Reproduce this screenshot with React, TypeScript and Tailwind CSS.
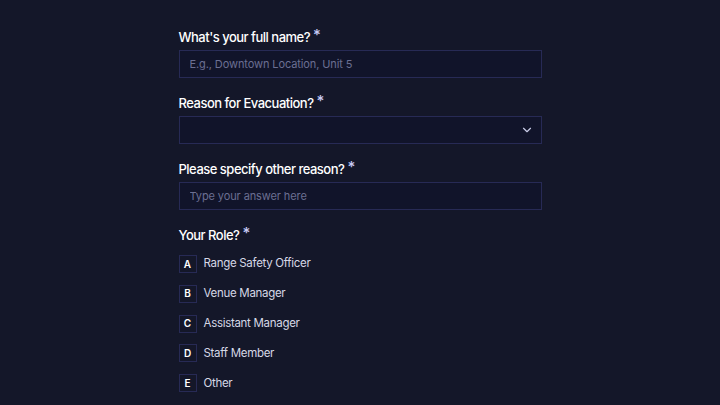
import { ChevronDown } from "lucide-react";

const roles = [
  { key: "A", label: "Range Safety Officer" },
  { key: "B", label: "Venue Manager" },
  { key: "C", label: "Assistant Manager" },
  { key: "D", label: "Staff Member" },
  { key: "E", label: "Other" },
];

const FieldLabel = ({ children }: { children: React.ReactNode }) => (
  <label className="flex items-start text-[13px] leading-[17px] font-medium text-white tracking-[-0.5px]">
    {children}
    <span className="ml-[3px] -mt-[3px] text-[15px] leading-[17px] text-[#c9cbf6]">*</span>
  </label>
);

const App = () => {
  return (
    <div
      className="min-h-[405px] w-full bg-[#141729] overflow-hidden"
      style={{ fontFamily: "Inter, 'Noto Sans', sans-serif" }}
    >
      <form className="mx-auto w-[363px] pt-[29px] flex flex-col gap-[17px]">
        <div className="flex flex-col gap-1">
          <FieldLabel>What's your full name?</FieldLabel>
          <input
            placeholder="E.g., Downtown Location, Unit 5"
            className="h-[28px] w-full bg-[#11142a] border border-[#272a55] px-[10px] text-[11px] tracking-[-0.1px] text-white placeholder:text-[#6b6f92] outline-none"
          />
        </div>

        <div className="flex flex-col gap-1">
          <FieldLabel>Reason for Evacuation?</FieldLabel>
          <div className="h-[28px] w-full bg-[#11142a] border border-[#272a55] flex items-center justify-end pr-[7px]">
            <ChevronDown className="w-[14px] h-[14px] text-[#c9cbe6]" strokeWidth={2} />
          </div>
        </div>

        <div className="flex flex-col gap-1">
          <FieldLabel>Please specify other reason?</FieldLabel>
          <input
            placeholder="Type your answer here"
            className="h-[28px] w-full bg-[#11142a] border border-[#272a55] px-[10px] text-[11px] tracking-[-0.1px] text-white placeholder:text-[#6b6f92] outline-none"
          />
        </div>

        <div className="flex flex-col gap-[11px]">
          <FieldLabel>Your Role?</FieldLabel>
          <div className="flex flex-col gap-[11.8px]">
            {roles.map((role) => (
              <div key={role.key} className="flex items-center gap-[7px]">
                <span className="w-[18px] h-[18px] border border-[#272a55] flex items-center justify-center text-[10px] font-semibold text-white">
                  {role.key}
                </span>
                <span className="text-[11.5px] tracking-[-0.3px] text-[#d6d8e6]">{role.label}</span>
              </div>
            ))}
          </div>
        </div>
      </form>
    </div>
  );
};

export default App;
